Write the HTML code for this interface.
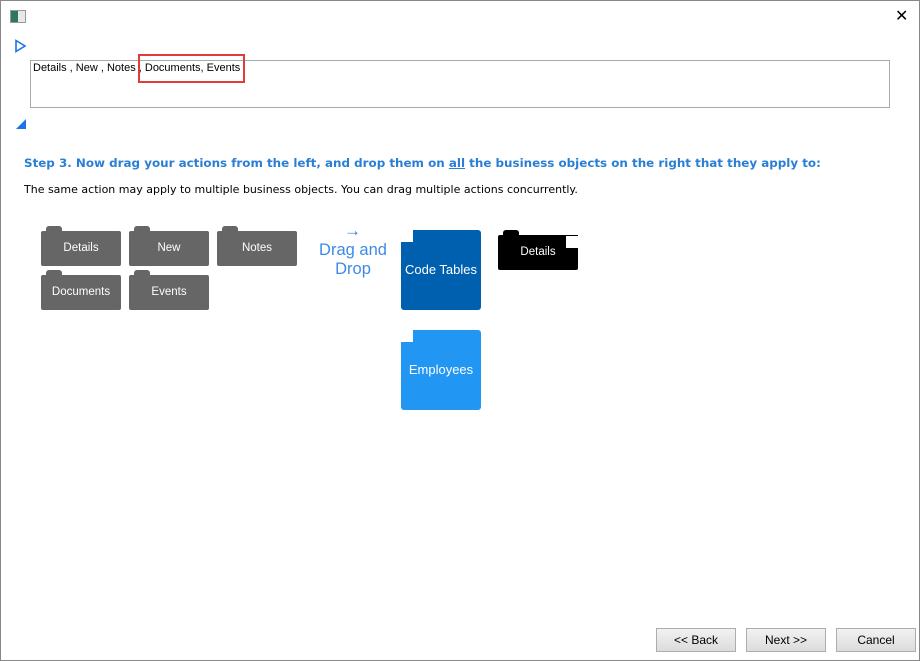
<!DOCTYPE html>
<html><head><style>
body{margin:0;width:920px;height:661px;background:#fff;position:relative;overflow:hidden;font-family:"Liberation Sans",sans-serif}
.win{position:absolute;left:0;top:0;width:918px;height:659px;border:1px solid #888}
.a{position:absolute}
.f{position:absolute;width:80px;height:35px;background:#666;border-radius:2px;color:#fff;font-family:"Liberation Sans",sans-serif;font-size:11.5px;text-align:center;line-height:35px}
.f:before{content:"";position:absolute;left:5px;top:-5px;width:16px;height:6px;background:#666;border-radius:3px 3px 0 0}
.btn{position:absolute;top:628px;width:78px;height:22px;border:1px solid #adadad;background:linear-gradient(#f2f2f2,#dcdcdc);font-size:12px;text-align:center;line-height:22px;color:#000}
</style></head><body>
<div class="win"></div>
<div class="a" style="left:10px;top:10px;width:14px;height:11px;border:1px solid #999;background:linear-gradient(90deg,#2d7a5a 50%,#e8e8e8 50%)"></div>
<div class="a" style="left:895px;top:6px;font-size:16px;color:#000">✕</div>
<svg class="a" style="left:14px;top:39px" width="14" height="14"><path d="M2 1.5 L11 7 L2 12.5 Z" fill="none" stroke="#1a73e8" stroke-width="1.6"/></svg>
<div class="a" style="left:30px;top:60px;width:858px;height:46px;border:1px solid #aaa"></div>
<div class="a" style="left:33px;top:62px;font-size:11px;color:#000">Details , New , Notes , Documents, Events</div>
<div class="a" style="left:138px;top:54px;width:103px;height:25px;border:2px solid #e03c3c"></div>
<svg class="a" style="left:15px;top:118px" width="12" height="12"><path d="M11 1 L11 11 L1 11 Z" fill="#1a73e8"/></svg>
<div class="a" style="left:24px;top:156px;font-family:'DejaVu Sans',sans-serif;font-weight:bold;font-size:11.9px;color:#2a7fd5;white-space:nowrap">Step 3. Now drag your actions from the left, and drop them on <u>all</u> the business objects on the right that they apply to:</div>
<div class="a" style="left:24px;top:183px;font-family:'DejaVu Sans',sans-serif;font-size:11px;color:#000;white-space:nowrap">The same action may apply to multiple business objects. You can drag multiple actions concurrently.</div>
<div class="f" style="left:41px;top:231px">Details</div>
<div class="f" style="left:129px;top:231px">New</div>
<div class="f" style="left:217px;top:231px">Notes</div>
<div class="f" style="left:41px;top:275px">Documents</div>
<div class="f" style="left:129px;top:275px">Events</div>
<div class="a" style="left:344px;top:221px;font-size:17px;color:#2a7fd5">→</div>
<div class="a" style="left:314px;top:241px;width:78px;text-align:center;font-family:'Liberation Sans',sans-serif;font-size:16.5px;line-height:19px;color:#3d8ae6">Drag and<br>Drop</div>
<div class="a" style="left:401px;top:230px;width:80px;height:80px;background:#0060b0;border-radius:3px;color:#fff;font-family:'Liberation Sans',sans-serif;font-size:13px;text-align:center;line-height:80px">Code Tables</div>
<div class="a" style="left:401px;top:230px;width:12px;height:12px;background:#fff"></div>
<div class="a" style="left:401px;top:330px;width:80px;height:80px;background:#2196f3;border-radius:3px;color:#fff;font-family:'Liberation Sans',sans-serif;font-size:13px;text-align:center;line-height:80px">Employees</div>
<div class="a" style="left:401px;top:330px;width:12px;height:12px;background:#fff"></div>
<div class="f" style="left:498px;top:235px;background:#000;width:80px">Details</div>
<div class="a" style="left:503px;top:230px;width:16px;height:6px;background:#000;border-radius:3px 3px 0 0"></div>
<div class="a" style="left:566px;top:235px;width:12px;height:12px;background:#fff;border-top:1px solid #000"></div>
<div class="btn" style="left:656px">&lt;&lt; Back</div>
<div class="btn" style="left:746px">Next &gt;&gt;</div>
<div class="btn" style="left:836px">Cancel</div>
</body></html>
